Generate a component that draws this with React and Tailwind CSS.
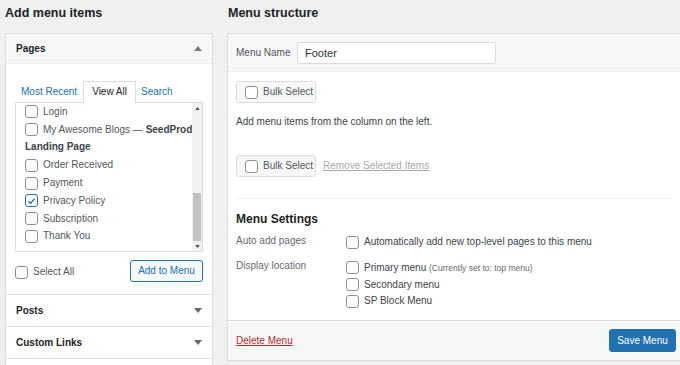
function Checkbox({ checked = false }) {
  return (
    <span
      className={`flex h-[13px] w-[13px] flex-shrink-0 items-center justify-center rounded-[3px] border bg-white ${
        checked ? 'border-[#2271b1]' : 'border-[#8c8f94]'
      }`}
    >
      {checked && (
        <svg viewBox="0 0 16 16" className="h-[12px] w-[12px]">
          <path d="M3.5 8.5l3 3 6-7" fill="none" stroke="#2271b1" strokeWidth="2" />
        </svg>
      )}
    </span>
  )
}

function Caret({ up = false }) {
  return (
    <svg viewBox="0 0 10 6" className="h-[5px] w-[8px]">
      <path d={up ? 'M0 6L5 0L10 6Z' : 'M0 0L10 0L5 6Z'} fill={up ? '#787c82' : '#646970'} />
    </svg>
  )
}

function PageItem({ label, checked }) {
  return (
    <div className="flex h-[17.8px] items-center gap-[5px] pl-[9px]">
      <Checkbox checked={checked} />
      <span className="text-[#50575e]">{label}</span>
    </div>
  )
}

function BulkSelect() {
  return (
    <div className="flex h-[22px] w-[80px] items-center gap-[5px] whitespace-nowrap rounded-[3px] border border-[#dcdcde] bg-[#f6f7f7] pl-[8px]">
      <Checkbox />
      <span className="text-[#50575e]">Bulk Select</span>
    </div>
  )
}

function LeftColumn() {
  return (
    <div className="w-[208px] flex-shrink-0">
      <h2 className="h-[18px] text-[12.5px] font-bold leading-[18px] text-[#1d2327]">Add menu items</h2>
      <div className="mt-[11px] border border-[#dcdcde] bg-white">
        <div className="flex h-[30px] items-center justify-between border-b border-[#f0f0f1] bg-[#f6f7f7] pl-[10px] pr-[10px]">
          <span className="font-bold text-[#1d2327]">Pages</span>
          <Caret up />
        </div>
        <div className="px-[9px] pt-[18px]">
          <div className="flex h-[20px] items-end">
            <span className="px-[6px] pb-[3px] text-[#2271b1]">Most Recent</span>
            <span className="-mb-px border border-b-0 border-[#dcdcde] bg-white px-[8px] pb-[4px] pt-[3px] text-[#1d2327]">
              View All
            </span>
            <span className="px-[5px] pb-[3px] text-[#2271b1]">Search</span>
          </div>
          <div className="flex h-[150px] overflow-hidden border border-[#dcdcde] bg-white">
            <div className="flex-1">
              <PageItem label="Login" />
              <div className="flex h-[17.8px] items-center gap-[5px] pl-[9px]">
                <Checkbox />
                <span className="whitespace-nowrap text-[#50575e]">
                  My Awesome Blogs — <span className="font-bold text-[#3c434a]">SeedProd</span>
                </span>
              </div>
              <div className="flex h-[17.8px] items-center pl-[9px] font-bold text-[#3c434a]">Landing Page</div>
              <PageItem label="Order Received" />
              <PageItem label="Payment" />
              <PageItem label="Privacy Policy" checked />
              <PageItem label="Subscription" />
              <PageItem label="Thank You" />
            </div>
            <div className="flex w-[10px] flex-col bg-[#f1f1f1]">
              <div className="flex h-[10px] items-center justify-center">
                <svg viewBox="0 0 6 4" className="h-[3px] w-[5px]"><path d="M0 4L3 0L6 4Z" fill="#505050" /></svg>
              </div>
              <div className="flex-1" />
              <div className="mx-[1px] h-[48px] bg-[#c1c1c1]" />
              <div className="flex h-[10px] items-center justify-center">
                <svg viewBox="0 0 6 4" className="h-[3px] w-[5px]"><path d="M0 0L6 0L3 4Z" fill="#505050" /></svg>
              </div>
            </div>
          </div>
          <div className="flex h-[42px] items-center justify-between pb-[4px]">
            <div className="flex items-center gap-[5px] pt-[2px]">
              <Checkbox />
              <span className="text-[#50575e]">Select All</span>
            </div>
            <div className="flex h-[22px] w-[73px] items-center justify-center rounded-[3px] border border-[#2271b1] bg-[#f6f7f7] text-[#2271b1]">
              Add to Menu
            </div>
          </div>
        </div>
        <div className="flex h-[32px] items-center justify-between border-t border-[#dcdcde] px-[10px]">
          <span className="font-bold text-[#1d2327]">Posts</span>
          <Caret />
        </div>
        <div className="flex h-[32px] items-center justify-between border-t border-[#dcdcde] px-[10px]">
          <span className="font-bold text-[#1d2327]">Custom Links</span>
          <Caret />
        </div>
        <div className="h-[20px] border-t border-[#dcdcde]" />
      </div>
    </div>
  )
}

function RightColumn() {
  return (
    <div className="w-[454px] flex-shrink-0">
      <h2 className="h-[18px] pl-[1px] text-[12.5px] font-bold leading-[18px] text-[#1d2327]">Menu structure</h2>
      <div className="mt-[11px] border border-[#dcdcde] bg-white">
        <div className="flex h-[38px] items-center border-b border-[#f0f0f1] bg-[#f6f7f7] pl-[8px]">
          <span className="w-[61px] text-[#50575e]">Menu Name</span>
          <div className="flex h-[22px] w-[199px] items-center rounded-[3px] border border-[#dcdcde] bg-white pl-[7px] text-[11px] text-[#2c3338]">
            Footer
          </div>
        </div>
        <div className="px-[8px] pt-[9px]">
          <BulkSelect />
          <p className="mt-[12px] text-[#3c434a]">Add menu items from the column on the left.</p>
          <div className="mt-[26px] flex items-center gap-[7px]">
            <BulkSelect />
            <span className="text-[#a7aaad] underline">Remove Selected Items</span>
          </div>
          <div className="mt-[21px] border-t border-[#f0f0f1]" />
          <h3 className="mt-[11px] text-[12px] font-bold leading-[18px] text-[#1d2327]">Menu Settings</h3>
          <div className="mt-[6px] flex">
            <span className="w-[110px] text-[#646970]">Auto add pages</span>
            <div className="flex items-center gap-[5px] pt-[1px]">
              <Checkbox />
              <span className="text-[#3c434a]">Automatically add new top-level pages to this menu</span>
            </div>
          </div>
          <div className="mt-[10px] flex pb-[11px]">
            <span className="w-[110px] text-[#646970]">Display location</span>
            <div className="flex flex-col">
              <div className="flex h-[17px] items-center gap-[5px]">
                <Checkbox />
                <span className="text-[#3c434a]">
                  Primary menu <span className="text-[8.5px] text-[#646970]">(Currently set to: top menu)</span>
                </span>
              </div>
              <div className="flex h-[17px] items-center gap-[5px]">
                <Checkbox />
                <span className="text-[#3c434a]">Secondary menu</span>
              </div>
              <div className="flex h-[16px] items-center gap-[5px]">
                <Checkbox />
                <span className="text-[#3c434a]">SP Block Menu</span>
              </div>
            </div>
          </div>
        </div>
        <div className="flex h-[40px] items-center justify-between border-t border-[#dcdcde] bg-[#f6f7f7] pl-[8px] pr-[4px]">
          <span className="text-[#b32d2e] underline">Delete Menu</span>
          <div className="flex h-[23px] w-[67px] items-center justify-center rounded-[3px] border border-[#2271b1] bg-[#2271b1] text-white">
            Save Menu
          </div>
        </div>
      </div>
    </div>
  )
}

export default function App() {
  return (
    <div
      className="flex h-[365px] w-[680px] gap-[14px] overflow-hidden bg-[#f0f0f1] pl-[5px] pt-[4px] text-[10px] leading-[14px]"
      style={{ fontFamily: '"Liberation Sans", Arial, sans-serif' }}
    >
      <LeftColumn />
      <RightColumn />
    </div>
  )
}
